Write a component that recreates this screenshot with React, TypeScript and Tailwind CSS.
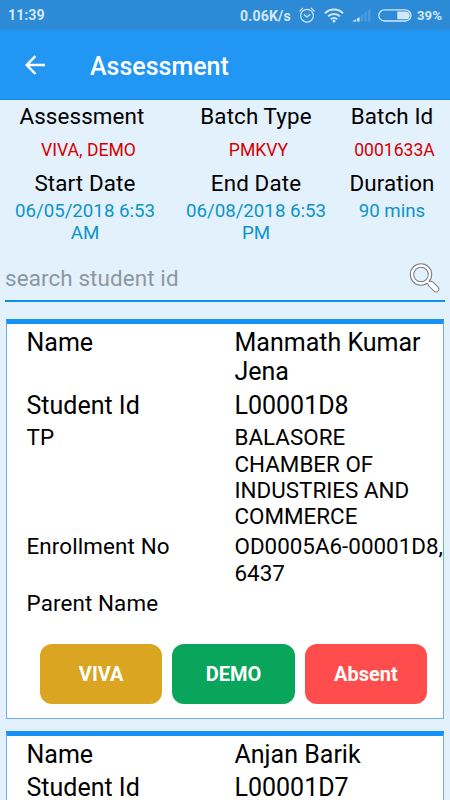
import { ReactNode } from 'react';

interface Student {
  name: string;
  studentId: string;
  tp?: string;
  enrollmentNo?: string;
  parentName?: string;
}

const students: Student[] = [
  {
    name: 'Manmath Kumar Jena',
    studentId: 'L00001D8',
    tp: 'BALASORE CHAMBER OF INDUSTRIES AND COMMERCE',
    enrollmentNo: 'OD0005A6-00001D8,\n6437',
    parentName: '',
  },
  {
    name: 'Anjan Barik',
    studentId: 'L00001D7',
  },
];

function StatusBar() {
  return (
    <div className="flex h-[30px] shrink-0 items-center bg-[#2c8ad6] pt-px pl-2 font-bold text-[#d3e8f8]">
      <span className="w-[232px] text-[14.2px] leading-none">11:39</span>
      <span className="w-[59px] text-[14px] leading-none tracking-[0.2px]">0.06K/s</span>
      {/* alarm */}
      <svg className="-mt-px h-4 w-4" viewBox="0 0 16 16" fill="none" stroke="currentColor" strokeWidth="1.2">
        <circle cx="8" cy="8.7" r="6.4" />
        <path d="M0.5 4.4 4 1M15.5 4.4 12 1M4.9 7.5 8 10l3.3-2.7" />
      </svg>
      {/* wifi */}
      <svg className="-mt-px ml-[9px] h-[15px] w-[20px]" viewBox="0 0 20 15" fill="none" stroke="currentColor" strokeWidth="2">
        <path d="M1 5.4a12.6 12.6 0 0 1 18 0M4 8.4a8.4 8.4 0 0 1 12 0M6.9 11.2a4.4 4.4 0 0 1 6.2 0" />
        <circle cx="10" cy="13" r="1.5" fill="currentColor" stroke="none" />
      </svg>
      {/* signal */}
      <svg className="-mt-px ml-2 h-[14px] w-[19px]" viewBox="0 0 19 14" fill="currentColor">
        <path d="M0 13.5 4 11.2v2.3zM4.9 10.8 7.5 8.9v4.6H4.9z" />
        <path opacity="0.2" d="M8.8 7.6l2.4-1.9v7.8H8.8zM12.5 5l2.3-2v10.5h-2.3zM16.1 2.4 18.4.5v13h-2.3z" />
      </svg>
      {/* battery */}
      <svg className="-mt-px ml-[7px] h-[13px] w-[34px]" viewBox="0 0 34 13" fill="none">
        <rect x="0.8" y="0.8" width="32.2" height="11.2" rx="5.6" stroke="currentColor" strokeWidth="1.3" />
        <path d="M19.3 2.5h8.6a3.9 3.9 0 0 1 0 7.8h-8.6z" fill="currentColor" />
      </svg>
      <span className="ml-[5px] text-[13.2px] leading-none">39%</span>
    </div>
  );
}

function Header() {
  return (
    <header className="flex h-[70px] shrink-0 items-center border-b border-[#1487ea] bg-[#2196f3] pl-[25px] text-white">
      <svg className="h-[20px] w-[20px]" viewBox="0 0 20 20" fill="none" stroke="currentColor" strokeWidth="2.4">
        <path d="M20 10H2.2M10.4 1.2 1.7 10l8.7 8.8" />
      </svg>
      <h1 className="mt-[4px] ml-[45px] text-[25px] font-medium leading-none">Assessment</h1>
    </header>
  );
}

function SummaryTitle({ children }: { children: ReactNode }) {
  return <div className="h-[26px] text-[22.4px] leading-[26px] tracking-[0.12px] whitespace-nowrap">{children}</div>;
}

function Summary() {
  return (
    <section className="grid h-[150px] shrink-0 grid-cols-[170px_172px_100px] pt-[3px] text-center">
      <div className="px-2">
        <div className="-mx-2 pr-[6px]">
          <SummaryTitle>Assessment</SummaryTitle>
        </div>
        <div className="mt-[10px] pl-[7px] text-[17.6px] leading-[22px] text-[#d50000]">VIVA, DEMO</div>
        <div className="mt-[9px]">
          <SummaryTitle>Start Date</SummaryTitle>
        </div>
        <div className="mt-[4px] text-[18.7px] leading-[22px] text-[#0c94ca]">06/05/2018 6:53 AM</div>
      </div>
      <div className="px-2">
        <SummaryTitle>Batch Type</SummaryTitle>
        <div className="mt-[10px] pl-[5px] text-[17.6px] leading-[22px] text-[#d50000]">PMKVY</div>
        <div className="mt-[9px]">
          <SummaryTitle>End Date</SummaryTitle>
        </div>
        <div className="mt-[4px] text-[18.7px] leading-[22px] text-[#0c94ca]">06/08/2018 6:53 PM</div>
      </div>
      <div>
        <SummaryTitle>Batch Id</SummaryTitle>
        <div className="mt-[10px] pl-[5px] text-[17.6px] leading-[22px] text-[#d50000]">0001633A</div>
        <div className="mt-[9px]">
          <SummaryTitle>Duration</SummaryTitle>
        </div>
        <div className="mt-[4px] text-[18.7px] leading-[22px] text-[#0c94ca]">90 mins</div>
      </div>
    </section>
  );
}

function SearchBar() {
  return (
    <div className="mx-[5px] flex h-[52px] shrink-0 items-center justify-between border-b-2 border-[#0d91f3]">
      <input
        className="mt-[8px] w-[300px] bg-transparent text-[22.4px] tracking-[0.12px] outline-none placeholder:text-[#8b989f]"
        placeholder="search student id"
      />
      <svg className="mt-[6px] mr-[5px] h-[30px] w-[31px]" viewBox="0 0 31 30" fill="none">
        <circle cx="12" cy="11.5" r="9" stroke="#777b80" strokeWidth="4.4" />
        <path d="M18.5 18.5 21 21" stroke="#777b80" strokeWidth="3.6" />
        <path d="M22 21.2 27 26" stroke="#777b80" strokeWidth="6.6" strokeLinecap="round" />
        <circle cx="12" cy="11.5" r="9" stroke="#fff" strokeWidth="2.4" />
        <path d="M18.5 18.5 21.5 21.5" stroke="#fff" strokeWidth="1.8" />
        <path d="M22 21.2 27 26" stroke="#fff" strokeWidth="4.8" strokeLinecap="round" />
      </svg>
    </div>
  );
}

interface FieldProps {
  label: string;
  value?: string;
  large?: boolean;
}

function Field({ label, value, large }: FieldProps) {
  if (value === undefined) return null;

  return (
    <div className={`flex ${large ? 'text-[25px] leading-[29.4px]' : 'text-[22.4px] leading-[26.3px]'}`}>
      <span className={`w-[208px] shrink-0 ${large ? '' : 'tracking-[0.12px]'}`}>{label}</span>
      <span className="w-[213px] shrink-0 whitespace-pre-line">{value}</span>
    </div>
  );
}

function StudentCard({ student }: { student: Student }) {
  const button = 'h-[60px] flex-1 rounded-xl text-[20px] font-bold text-white';

  return (
    <article className="mx-[6px] h-[400px] shrink-0 border border-t-[5px] border-[#6caef3] border-t-[#1492f5] bg-white pt-[4px]">
      <div className="flex h-[316px] flex-col gap-[4px] pl-[19.5px]">
        <Field label="Name" value={student.name} large />
        <Field label="Student Id" value={student.studentId} large />
        <Field label="TP" value={student.tp} />
        <Field label="Enrollment No" value={student.enrollmentNo} />
        <Field label="Parent Name" value={student.parentName} />
      </div>
      <div className="mr-[16px] ml-[33px] flex gap-[10px]">
        <button className={`${button} bg-[#daa520]`}>VIVA</button>
        <button className={`${button} bg-[#08a55a]`}>DEMO</button>
        <button className={`${button} bg-[#ff4d4d]`}>Absent</button>
      </div>
    </article>
  );
}

export default function App() {
  return (
    <div className="flex h-screen w-full flex-col overflow-hidden bg-[#e3f1fd] font-['Roboto',sans-serif] text-black">
      <StatusBar />
      <Header />
      <Summary />
      <SearchBar />
      <main className="flex flex-col gap-3 pt-[17px]">
        {students.map((student) => (
          <StudentCard key={student.studentId} student={student} />
        ))}
      </main>
    </div>
  );
}
